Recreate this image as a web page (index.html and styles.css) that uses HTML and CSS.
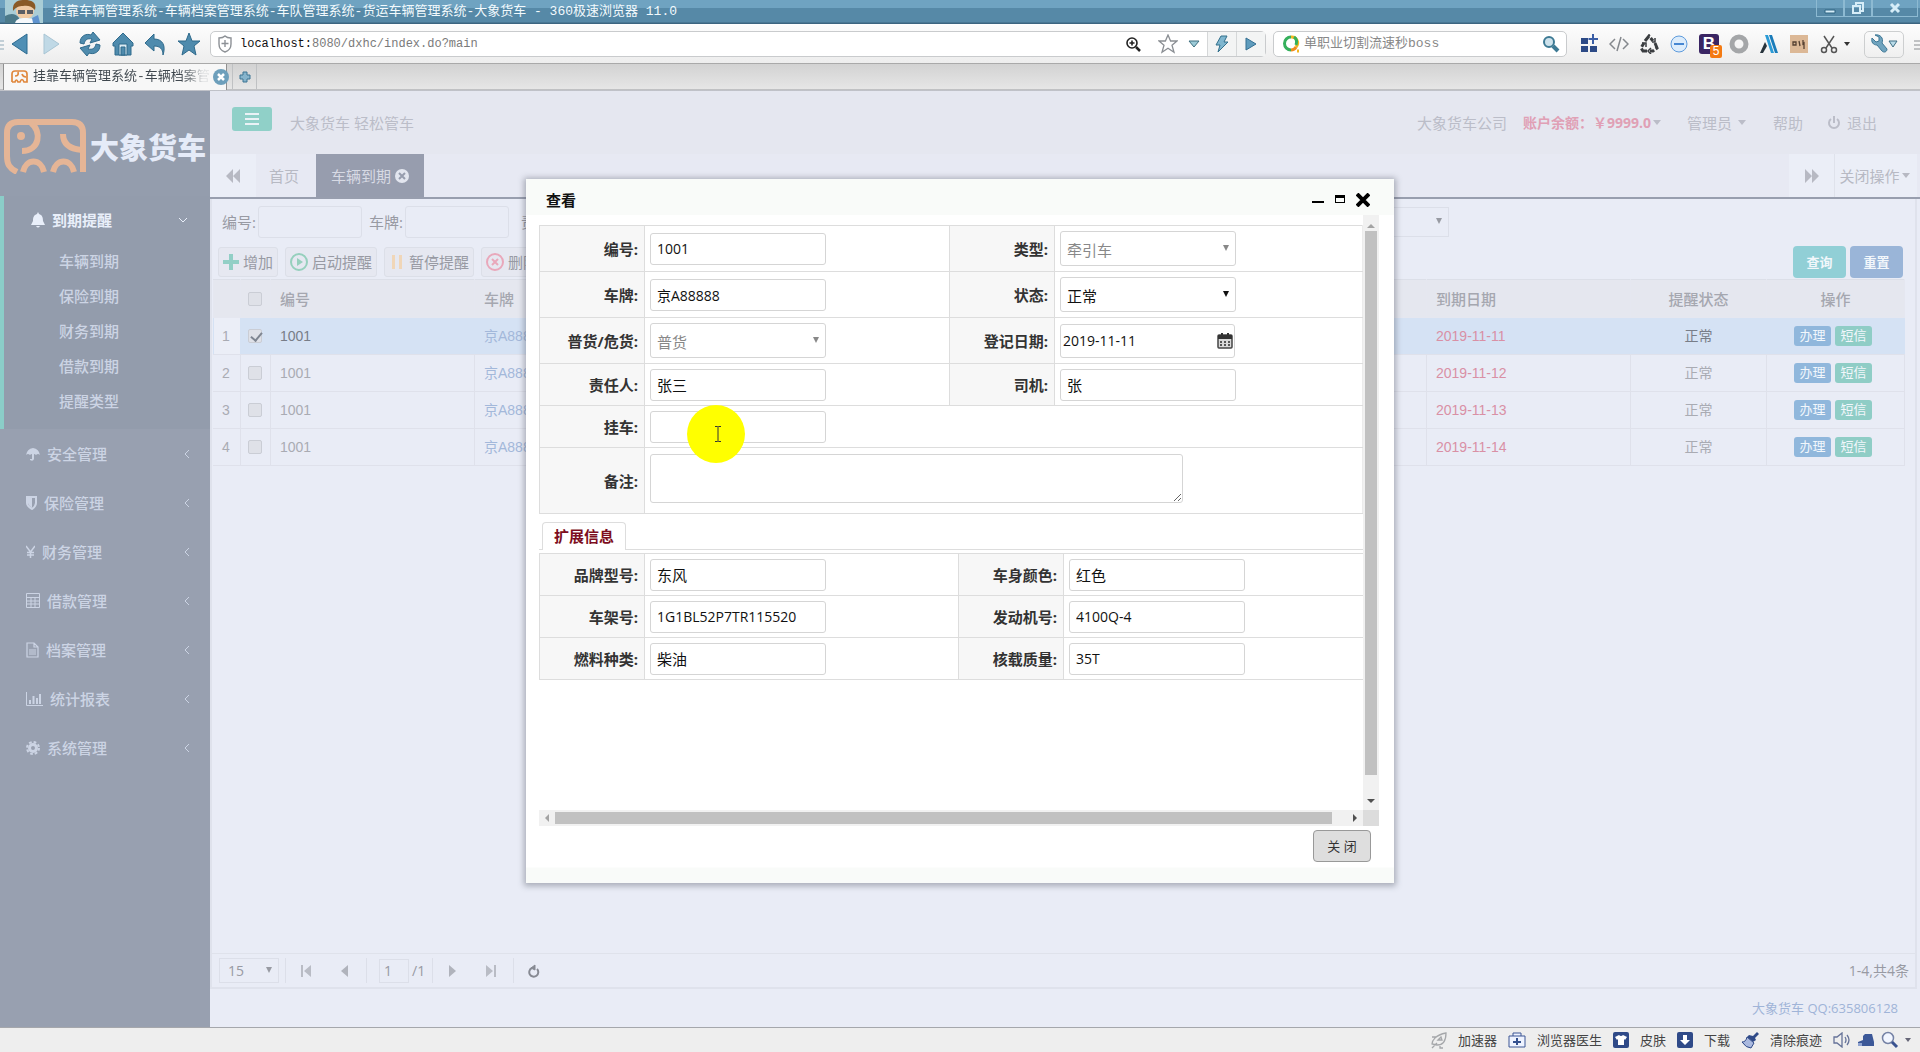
FILE: index.html
```html
<!DOCTYPE html>
<html lang="zh-CN">
<head>
<meta charset="utf-8">
<title>挂靠车辆管理系统-车辆档案管理系统</title>
<link rel="stylesheet" href="styles.css">
</head>
<body>
<div class="titlebar">
  <svg class="avatar" width="38" height="23" viewBox="0 0 38 23"><rect width="38" height="23" fill="#a9cdd6"/><path d="M0 16q9-5 14 2v5H0z" fill="#4c7a8a"/><ellipse cx="20" cy="11" rx="9" ry="8" fill="#f1cba4"/><path d="M8 11C7 1 14 0 20 0s12 2 10 10c-3-4-8-5-12-4-4 0-7 1-10 5z" fill="#8a5a26"/><path d="M13 10h7v4h-7zM22 10h6v4h-6z" fill="#5b5f66"/><path d="M10 23c1-4 5-5 10-5s12 1 13 5z" fill="#f5f8fb"/><path d="M27 18l6-3 2 8h-7z" fill="#5f93cf"/></svg>
  <span class="window-title">挂靠车辆管理系统-车辆档案管理系统-车队管理系统-货运车辆管理系统-大象货车 - 360极速浏览器 11.0</span>
  <div class="window-buttons">
    <button type="button" aria-label="最小化"><svg width="12" height="12"><path d="M1 8h10v3H1z" fill="#d6edf8" stroke="#2f6482"/></svg></button>
    <button type="button" aria-label="还原"><svg width="12" height="12" fill="none" stroke="#d6edf8" stroke-width="2"><path d="M4 3V1h7v8H9"/><path d="M1 4h7v7H1z"/></svg></button>
    <button type="button" class="wide" aria-label="关闭窗口"><svg width="12" height="12" fill="none" stroke="#d6edf8" stroke-width="3"><path d="M2 2l8 8M10 2l-8 8"/></svg></button>
  </div>
</div>

<div class="toolbar">
  <div class="nav-icons">
    <svg class="grip" width="5" height="24" stroke="#8fa9b8"><path d="M0 9h4M0 13h4M0 17h4"/></svg>
    <button type="button" aria-label="后退"><svg width="22" height="26"><path d="M18 3v20L3 13z" fill="#4f8fb5" stroke="#2b6a90" stroke-linejoin="round"/></svg></button>
    <button type="button" aria-label="前进"><svg width="22" height="26"><path d="M4 3v20l15-10z" fill="#c0d9e6" stroke="#a8c5d4" stroke-linejoin="round"/></svg></button>
    <button type="button" class="spaced" aria-label="刷新"><svg width="24" height="26" fill="#4f8bad" stroke="#2f6a8c" stroke-linejoin="round"><path d="M2 12C2 5 8 2 13 4l2-3 7 8-10 3 2-4c-5-1-7 1-8 5z"/><path d="M22 14c0 7-6 10-11 8l-2 3-7-8 10-3-2 4c5 1 7-1 8-5z"/></svg></button>
    <button type="button" aria-label="主页"><svg width="24" height="26" stroke="#2f6a8c" stroke-linejoin="round"><path d="M12 2l10 10v3h-2v9H4v-9H2v-3z" fill="#4f8bad"/><path d="M8 13h8v11h-8z" fill="#dcebf3"/><path d="M10 16h4v8h-4z" fill="#4f8bad"/></svg></button>
    <button type="button" aria-label="撤销"><svg width="24" height="26"><path d="M10 3v5c9 0 12 7 9 16 0-6-3-9-9-9v5L1 12z" fill="#4f8bad" stroke="#2f6a8c" stroke-linejoin="round"/></svg></button>
    <button type="button" aria-label="收藏"><svg width="24" height="26"><path d="M12 2l3 8h8l-6 5 2 9-7-5-7 5 2-9-6-5h8z" fill="#4f8bad" stroke="#2f6a8c" stroke-linejoin="round"/></svg></button>
  </div>
  <div class="address">
    <svg width="16" height="20" fill="none" stroke="#8d9196" stroke-width="1.4"><path d="M8 2c2 2 4 2 6 2v6c0 4-3 7-6 8-3-1-6-4-6-8V4c2 0 4 0 6-2zM8 6v7M4.500 9.500h7"/></svg>
    <span class="url"><span class="host">localhost:</span>8080/dxhc/index.do?main</span>
    <svg width="18" height="18" fill="none" stroke="#222" stroke-width="1.600"><circle cx="8" cy="8" r="5"/><path d="M12 12l4 4" stroke-width="2.500"/><path d="M5.500 8h5M8 5.500v5"/></svg>
    <svg class="fav" width="20" height="20" fill="#fff" stroke="#8a8e93" stroke-width="1.300"><path d="M10 1l2.600 6h6.400l-5 4.200 2 7-6-4-6 4 2-7L1 7h6.400z"/></svg>
    <svg width="12" height="8"><path d="M1 1h10L6 7z" fill="#9ccbd8" stroke="#3d6f7e"/></svg>
    <button type="button" class="seg" aria-label="极速模式"><svg width="14" height="18"><path d="M6 1h6L9 7h4L3 17l2-7H1z" fill="#7fb6cf" stroke="#33708c"/></svg></button>
    <button type="button" class="seg" aria-label="转到"><svg width="14" height="16"><path d="M2 2v12l10-6z" fill="#5f9cbd" stroke="#336f92"/></svg></button>
  </div>
  <div class="search">
    <svg width="18" height="20" fill="none" stroke-width="3"><path d="M8 3a6 6 0 0 1 5 10" stroke="#f3b61f"/><path d="M8 3a6 6 0 0 0 0 13" stroke="#35b05c"/><path d="M8 16c2 0 4-1 5-3" stroke="#f08b1d"/><path d="M11 3c3 2 3 5 2 8" stroke="#35b05c"/><path d="M14 17h2" stroke="#f3b61f"/></svg>
    <input class="search-text" aria-label="搜索" value="单职业切割流速秒boss">
    <svg width="18" height="20" fill="#cde2ec" stroke="#3d7a94" stroke-width="2"><circle cx="7" cy="8" r="5"/><path d="M11 12l5 5" stroke-width="4"/></svg>
  </div>
  <div class="extensions">
    <svg width="20" height="20" fill="#2c4a86"><path d="M2 4h7v6H2zM2 12h7v6H2zM11 12h7v6h-7z"/><path d="M13 0h2v4h4v2h-4v4h-2V6H9.500V4H13z" fill="#3a5ea6"/></svg>
    <svg width="20" height="16" fill="none" stroke="#84888d" stroke-width="1.500"><path d="M6 3L1 8l5 5M14 3l5 5-5 5M12 1L8 15"/></svg>
    <svg width="20" height="20" fill="none" stroke="#3a3d40" stroke-width="3"><path d="M6 7l4-5 4 5M16 9l2 5-4 3h-3M8 17H4l-2-3 3-5" stroke-dasharray="7 2"/><path d="M12 14l-3 3 3 3M13 8h3V4M3 9h4v4" stroke-width="1.500"/></svg>
    <svg width="20" height="20"><circle cx="10" cy="10" r="8" fill="#dcecfb" stroke="#5e9bdc"/><path d="M5 9h10v2H5z" fill="#4586d2"/></svg>
    <span class="ext-b">B<span class="badge">5</span></span>
    <svg width="20" height="20"><circle cx="10" cy="10" r="7" fill="none" stroke="#a4a6a8" stroke-width="5"/></svg>
    <svg width="20" height="20"><path d="M6 1h3l6 18h-3z" fill="#2b9bd6"/><path d="M10 1h3l6 18h-3z" fill="#1a7cba"/><path d="M6 8l2 4-4 7H1z" fill="#27333c"/></svg>
    <svg width="20" height="20"><path d="M1 1h18v18H1z" fill="#dcb896"/><path d="M4 8h3v3H4zM10 7l1 5M14 6v4l1-1v6" fill="none" stroke="#554032" stroke-width="1.300"/></svg>
    <svg width="20" height="20" fill="none" stroke="#555" stroke-width="1.500"><path d="M5 2l8 12M15 2L7 14"/><circle cx="5" cy="16" r="2.500"/><circle cx="15" cy="16" r="2.500"/></svg>
    <svg class="tiny" width="6" height="4"><path d="M0 0h6L3 4z" fill="#333"/></svg>
    <button type="button" class="wrench" aria-label="工具"><svg width="28" height="20"><path d="M2 4l4 4 3-1V3L5 1c5-1 9 3 7 8l5 6c0 3-3 4-5 2l-5-6C3 11 1 8 2 4z" fill="#6fa3be" stroke="#3f7896"/><path d="M19 7h8l-4 6z" fill="#b9dbe8" stroke="#3f6f85"/></svg></button>
    <svg width="6" height="24" stroke="#8a8d90"><path d="M0 9h6M0 13h6M0 17h6"/></svg>
  </div>
</div>

<div class="tabstrip">
  <div class="browser-tab">
    <svg width="18" height="14" fill="none" stroke="#e0873c" stroke-width="1.700"><path d="M2 12V4q0-3 3-3h9q3 0 3 3v8h-3q-2-5-4 0H8q-2-4-3 0H2M8 2q1 4-3 4M12 4q1 3 4 3"/></svg>
    <span class="tab-title">挂靠车辆管理系统-车辆档案管</span>
    <button type="button" aria-label="关闭标签"><svg width="16" height="16"><circle cx="8" cy="8" r="8" fill="#6d9fbb"/><path d="M5 5l6 6M11 5l-6 6" stroke="#fff" stroke-width="2.500"/></svg></button>
  </div>
  <button type="button" class="new-tab" aria-label="新标签"><svg width="12" height="12"><path d="M4 1h4v3h3v4H8v3H4V8H1V4h3z" fill="#86b4cc" stroke="#3c7593"/></svg></button>
</div>

<div class="app">
  <aside class="sidebar">
    <div class="logo">
      <svg width="84" height="56" viewBox="0 0 84 56" fill="none" stroke="#e5b596" stroke-width="6"><path d="M14 54C6 50 4 46 4 38V15Q4 4 15 4H69Q80 4 80 15V54"/><path d="M20 54C23 40 38 40 41 54M50 54C53 40 68 40 71 54"/><path d="M28 5C39 13 37 33 19 33"/><path d="M60 16C60 25 66 31 79 32"/><circle cx="18" cy="18" r="4" fill="#e5b596" stroke="none"/></svg>
      <span>大象货车</span>
    </div>
    <nav>
      <div class="group-active">
        <a href="#" class="group-head"><svg width="14" height="16" fill="currentColor"><path d="M7 0l1 2c3 1 4 3 4 7l2 4H0l2-4c0-4 1-6 4-7zM5 14h4q-2 3-4 0z"/></svg><span>到期提醒</span><svg class="chev" width="8" height="6" fill="none" stroke="currentColor"><path d="M0 1l4 4 4-4"/></svg></a>
        <a href="#" class="sub">车辆到期</a>
        <a href="#" class="sub">保险到期</a>
        <a href="#" class="sub">财务到期</a>
        <a href="#" class="sub">借款到期</a>
        <a href="#" class="sub">提醒类型</a>
      </div>
      <a href="#" class="group"><svg width="14" height="14" fill="currentColor"><path d="M0 8Q1 2 7 1q6 1 7 7-2-2-4 0-1-1-2-1v5q-1 3-4 1v-1h2V7q-1 0-2 1-2-2-4 0z"/></svg><span>安全管理</span><svg class="chev" width="6" height="8" fill="none" stroke="currentColor"><path d="M5 0L1 4l4 4"/></svg></a>
      <a href="#" class="group"><svg width="11" height="14" fill="none" stroke="currentColor" stroke-width="2"><path d="M1 1h9v6q0 3-4 6Q1 10 1 7z"/><path d="M2 2h4v10Q2 9 2 7z" fill="currentColor" stroke="none"/></svg><span>保险管理</span><svg class="chev" width="6" height="8" fill="none" stroke="currentColor"><path d="M5 0L1 4l4 4"/></svg></a>
      <a href="#" class="group"><svg width="9" height="14" fill="none" stroke="currentColor" stroke-width="1.500"><path d="M0 1l4.500 6L9 1M4.500 7v6M1 7.500h7M1 10h7"/></svg><span>财务管理</span><svg class="chev" width="6" height="8" fill="none" stroke="currentColor"><path d="M5 0L1 4l4 4"/></svg></a>
      <a href="#" class="group"><svg width="14" height="16" fill="none" stroke="currentColor"><path d="M.5.500h13v14H.500zM1 4.500h13M1 8h13M1 11h13M5 5v10M9 5v10"/></svg><span>借款管理</span><svg class="chev" width="6" height="8" fill="none" stroke="currentColor"><path d="M5 0L1 4l4 4"/></svg></a>
      <a href="#" class="group"><svg width="13" height="16" fill="none" stroke="currentColor" stroke-width="1.200"><path d="M1 1h7l4 4v10H1zM8 1v4h4M3 8h7M3 10h7M3 12h7"/></svg><span>档案管理</span><svg class="chev" width="6" height="8" fill="none" stroke="currentColor"><path d="M5 0L1 4l4 4"/></svg></a>
      <a href="#" class="group"><svg width="17" height="14" fill="none" stroke="currentColor"><path d="M.5 0v13.500H17"/><path d="M4 12V8M7.500 12V4M11 12V6M14 12V2" stroke-width="2"/></svg><span>统计报表</span><svg class="chev" width="6" height="8" fill="none" stroke="currentColor"><path d="M5 0L1 4l4 4"/></svg></a>
      <a href="#" class="group"><svg width="14" height="14" fill="none" stroke="currentColor"><circle cx="7" cy="7" r="3.500" stroke-width="3"/><circle cx="7" cy="7" r="6" stroke-width="2" stroke-dasharray="2.700 2"/></svg><span>系统管理</span><svg class="chev" width="6" height="8" fill="none" stroke="currentColor"><path d="M5 0L1 4l4 4"/></svg></a>
    </nav>
  </aside>

  <main class="main">
    <header class="topbar">
      <button type="button" class="menu-btn" aria-label="菜单"><svg width="14" height="14" fill="#eaf2f6"><path d="M0 1h14v2H0zM0 6h14v2H0zM0 11h14v2H0z"/></svg></button>
      <span class="slogan">大象货车 轻松管车</span>
      <div class="account">
        <span>大象货车公司</span>
        <a href="#" class="balance">账户余额：￥9999.0<i class="caret"></i></a>
        <a href="#" class="admin">管理员 <i class="caret"></i></a>
        <a href="#" class="help">帮助</a>
        <a href="#" class="quit"><svg width="14" height="14" fill="none" stroke="currentColor" stroke-width="2"><path d="M4 3a5 5 0 1 0 6 0M7 0v7"/></svg>退出</a>
      </div>
    </header>
    <div class="page-tabs">
      <button type="button" class="scroll-btn" aria-label="向左"><svg width="14" height="14" fill="currentColor"><path d="M7 0v14L0 7zM14 0v14L7 7z"/></svg></button>
      <a href="#" class="page-tab">首页</a>
      <a href="#" class="page-tab current">车辆到期<svg width="14" height="14"><circle cx="7" cy="7" r="7" fill="#e3e6ef"/><path d="M4 4l6 6M10 4l-6 6" stroke="#979dae" stroke-width="2"/></svg></a>
      <button type="button" class="scroll-btn right" aria-label="向右"><svg width="14" height="14" fill="currentColor"><path d="M0 0v14l7-7zM7 0v14l7-7z"/></svg></button>
      <button type="button" class="close-ops">关闭操作<i class="caret"></i></button>
    </div>
    <section class="panel">
      <form class="filters">
        <label for="f-no">编号:</label><input id="f-no">
        <label for="f-plate">车牌:</label><input id="f-plate">
        <label for="f-owner" class="owner">责任人:</label>
        <span class="select-wrap"><select id="f-owner"><option></option></select></span>
      </form>
      <div class="actions">
        <button type="button"><svg width="16" height="16"><path d="M6 0h4v6h6v4h-6v6H6v-6H0V6h6z" fill="#92cfc6"/></svg>增加</button>
        <button type="button"><svg width="18" height="18"><circle cx="9" cy="9" r="8" fill="none" stroke="#96d0bd" stroke-width="2"/><path d="M7 5v8l6-4z" fill="#96d0bd"/></svg>启动提醒</button>
        <button type="button" class="pause"><svg width="18" height="16"><path d="M3 1h3v14H3zM10 1h3v14h-3z" fill="#f0d6b8"/></svg>暂停提醒</button>
        <button type="button"><svg width="18" height="18" fill="none" stroke="#e9a8bb" stroke-width="2"><circle cx="9" cy="9" r="8"/><path d="M6 6l6 6M12 6l-6 6"/></svg>删除</button>
        <button type="button" class="query">查询</button>
        <button type="button" class="reset">重置</button>
      </div>
      <table class="grid">
        <colgroup><col class="c-num"><col class="c-check"><col class="c-no"><col><col class="c-date"><col class="c-state"><col class="c-ops"></colgroup>
        <thead><tr><th></th><th><input type="checkbox" aria-label="全选"></th><th>编号</th><th>车牌</th><th>到期日期</th><th class="center">提醒状态</th><th class="center">操作</th></tr></thead>
        <tbody>
          <tr class="selected"><td>1</td><td><input type="checkbox" aria-label="选择1" checked></td><td>1001</td><td><a href="#">京A88888</a></td><td class="due">2019-11-11</td><td class="center">正常</td><td class="ops"><button type="button">办理</button><button type="button" class="sms">短信</button></td></tr>
          <tr><td>2</td><td><input type="checkbox" aria-label="选择2"></td><td>1001</td><td><a href="#">京A88888</a></td><td class="due">2019-11-12</td><td class="center">正常</td><td class="ops"><button type="button">办理</button><button type="button" class="sms">短信</button></td></tr>
          <tr><td>3</td><td><input type="checkbox" aria-label="选择3"></td><td>1001</td><td><a href="#">京A88888</a></td><td class="due">2019-11-13</td><td class="center">正常</td><td class="ops"><button type="button">办理</button><button type="button" class="sms">短信</button></td></tr>
          <tr><td>4</td><td><input type="checkbox" aria-label="选择4"></td><td>1001</td><td><a href="#">京A88888</a></td><td class="due">2019-11-14</td><td class="center">正常</td><td class="ops"><button type="button">办理</button><button type="button" class="sms">短信</button></td></tr>
        </tbody>
      </table>
      <div class="pager">
        <span class="select-wrap"><select aria-label="每页条数"><option>15</option></select></span>
        <div class="pair">
          <button type="button" aria-label="首页"><svg width="10" height="12"><path d="M0 0h2v12H0zM10 0v12L3 6z" fill="#b9bcc5"/></svg></button>
          <button type="button" aria-label="上一页"><svg width="8" height="12"><path d="M7 0v12L0 6z" fill="#b0b3bc"/></svg></button>
        </div>
        <div class="page-no"><input aria-label="页码" value="1"><span>/1</span></div>
        <div class="pair">
          <button type="button" aria-label="下一页"><svg width="8" height="12"><path d="M1 0v12l7-6z" fill="#b0b3bc"/></svg></button>
          <button type="button" aria-label="末页"><svg width="10" height="12"><path d="M8 0h2v12H8zM0 0v12l7-6z" fill="#b9bcc5"/></svg></button>
        </div>
        <button type="button" class="refresh" aria-label="刷新列表"><svg width="12" height="14" fill="none" stroke="#878a93" stroke-width="2"><path d="M4 4a4.500 4.500 0 1 0 5 1"/><path d="M3 4l4-3v5z" fill="#878a93" stroke-width="1"/></svg></button>
        <span class="total">1-4,共4条</span>
      </div>
    </section>
    <footer class="page-foot">大象货车 QQ:635806128</footer>
  </main>

  <div class="overlay">
    <div class="dialog" role="dialog" aria-labelledby="dlg-title">
      <div class="dialog-head">
        <h2 id="dlg-title">查看</h2>
        <button type="button" aria-label="最小化"><svg width="12" height="14"><path d="M0 8h12v2H0z"/></svg></button>
        <button type="button" aria-label="最大化"><svg width="12" height="14"><path d="M1 2h10v8H1zM2 5v4h8V5z" fill-rule="evenodd"/></svg></button>
        <button type="button" aria-label="关闭"><svg width="14" height="14" stroke="#000" stroke-width="4"><path d="M1 1l12 12M13 1L1 13"/></svg></button>
      </div>
      <div class="dialog-body">
        <div class="viewport">
          <table class="form base">
            <colgroup><col class="k"><col class="v1"><col class="k"><col></colgroup>
            <tr class="tall"><th><label for="no">编号:</label></th><td><input id="no" value="1001"></td><th><label for="type">类型:</label></th><td><span class="select-wrap"><select id="type" disabled><option>牵引车</option></select></span></td></tr>
            <tr class="tall"><th><label for="plate">车牌:</label></th><td><input id="plate" value="京A88888"></td><th><label for="state">状态:</label></th><td><span class="select-wrap"><select id="state"><option>正常</option></select></span></td></tr>
            <tr class="tall"><th><label for="goods">普货/危货:</label></th><td><span class="select-wrap"><select id="goods" disabled><option>普货</option></select></span></td><th><label for="reg">登记日期:</label></th><td><span class="date"><input id="reg" value="2019-11-11"><svg width="16" height="16"><path d="M2 2h12q1 0 1 1v11q0 1-1 1H2q-1 0-1-1V3q0-1 1-1z" fill="#d8d8d8" stroke="#444" stroke-width="1.500"/><path d="M1 2h14v4H1zM4 0h2v3H4zM10 0h2v3h-2z" fill="#333"/><path d="M3 8h2v2H3zM7 8h2v2H7zM11 8h2v2h-2zM3 11h2v2H3zM7 11h2v2H7zM11 11h2v2h-2z" fill="#555"/></svg></span></td></tr>
            <tr><th><label for="duty">责任人:</label></th><td><input id="duty" class="han" value="张三"></td><th><label for="driver">司机:</label></th><td><input id="driver" class="han" value="张"></td></tr>
            <tr><th><label for="trailer">挂车:</label></th><td colspan="3"><input id="trailer"></td></tr>
            <tr class="memo"><th><label for="memo">备注:</label></th><td colspan="3"><textarea id="memo"></textarea></td></tr>
          </table>
          <div class="ext-tabs"><span>扩展信息</span></div>
          <table class="form extra">
            <colgroup><col class="k"><col class="v2"><col class="k"><col></colgroup>
            <tr><th><label for="brand">品牌型号:</label></th><td><input id="brand" class="han" value="东风"></td><th><label for="color">车身颜色:</label></th><td><input id="color" class="han" value="红色"></td></tr>
            <tr><th><label for="vin">车架号:</label></th><td><input id="vin" value="1G1BL52P7TR115520"></td><th><label for="engine">发动机号:</label></th><td><input id="engine" value="4100Q-4"></td></tr>
            <tr><th><label for="fuel">燃料种类:</label></th><td><input id="fuel" class="han" value="柴油"></td><th><label for="load">核载质量:</label></th><td><input id="load" value="35T"></td></tr>
          </table>
        </div>
        <div class="vbar"><svg width="8" height="4"><path d="M0 4l4-4 4 4z" fill="#a3a3a3"/></svg><i></i><svg width="8" height="4"><path d="M0 0h8L4 4z" fill="#505050"/></svg></div>
        <div class="hbar"><svg width="4" height="8"><path d="M4 0v8L0 4z" fill="#a3a3a3"/></svg><i></i><svg width="4" height="8"><path d="M0 0v8l4-4z" fill="#505050"/></svg></div>
        <div class="corner"></div>
      </div>
      <div class="dialog-foot"><button type="button">关 闭</button></div>
      <div class="pointer"><svg width="8" height="16" fill="none" stroke="#333"><path d="M1 .500h2.500l.500.500.500-.500H7M1 15.500h2.500l.500-.500.500.500H7M4 1v14"/></svg></div>
    </div>
  </div>
</div>

<div class="statusbar">
  <svg width="16" height="18" fill="none" stroke="#a5a7aa" stroke-width="1.300"><path d="M1 13c0-3 3-9 14-11 0 8-3 12-9 12zM1 6h4M1 17l5-5M9 15v2h3M7 9l3-3 1 3z"/></svg><span>加速器</span>
  <svg width="18" height="18" fill="#eef3ff" stroke="#3d5795"><path d="M5 5V2h8v3M1 5h16v11H1z"/><path d="M8 7h2v3h3v2h-3v2H8v-2H5v-2h3z" fill="#33508f" stroke="none"/></svg><span>浏览器医生</span>
  <svg width="16" height="16"><rect width="16" height="16" rx="2" fill="#2f4a88"/><path d="M6 3q2 2 4 0l4 2-2 3-1-1v6H5V7L4 8 2 5z" fill="#fff"/></svg><span>皮肤</span>
  <svg width="16" height="16"><rect width="16" height="16" rx="2" fill="#2f4a88"/><path d="M6 3h4v5h3l-5 5-5-5h3z" fill="#fff"/></svg><span>下载</span>
  <svg width="18" height="18"><path d="M12 5l4-4 2 2-4 4 1 2-3 2-6-5 2-2z" fill="#2f4a88"/><path d="M6 6l7 6-3 5q-5 0-9-6 4 0 5-5z" fill="#aab9df" stroke="#2f4a88"/></svg><span>清除痕迹</span>
  <svg width="18" height="16" fill="none" stroke="#667399" stroke-width="1.300"><path d="M1 5h3l5-4v14l-5-4H1zM12 5q2 3 0 6M14 3q4 5 0 10"/></svg>
  <svg width="18" height="14"><path d="M6 3l2-2h7l2 8v4H1V9l5-2z" fill="#3c5898"/><path d="M1 10h4v3H1z" fill="#8fa3d0"/></svg>
  <svg width="18" height="18"><circle cx="7" cy="7" r="5.500" fill="#f2f6ff" stroke="#7582a5" stroke-width="1.500"/><path d="M11 11l5 5" stroke="#3a5390" stroke-width="3"/></svg>
  <svg width="6" height="4"><path d="M0 0h6L3 4z" fill="#667"/></svg>
</div>
</body>
</html>
```
FILE: styles.css
```css
* { box-sizing: border-box; }
body {
  margin: 0;
  min-height: 100vh;
  display: flex;
  flex-direction: column;
  font: 15px/20px "Open Sans", "Noto Sans CJK SC", sans-serif;
  color: #9d9fa8;
  background: #e9ecf6;
}
button, input, select, textarea { font: inherit; color: inherit; margin: 0; padding: 0; border: 0; background: none; }
a { color: inherit; text-decoration: none; }
svg { display: block; flex: none; }
button { display: flex; align-items: center; justify-content: center; }
table { border-collapse: collapse; table-layout: fixed; width: 100%; }

/* browser chrome */
.titlebar {
  height: 24px;
  display: flex;
  align-items: center;
  padding-left: 5px;
  gap: 10px;
  background: linear-gradient(#6fa3c1 0 8px, #5689a7 8px 22px, #3c6580 23px);
  color: #f2fafd;
  font: 13px/24px "Liberation Mono", "Noto Sans CJK SC", monospace;
}
.avatar { align-self: flex-start; }
.window-title { flex: 1; white-space: nowrap; }
.window-buttons { display: flex; align-self: flex-start; margin-right: 2px; }
.window-buttons button { width: 28px; height: 17px; border: 1px solid #8dbad2; border-top: 0; }
.window-buttons .wide { width: 46px; }
.toolbar { height: 39px; display: flex; align-items: center; background: linear-gradient(#fdfdfd, #ededed); border-top: 1px solid #fff; }
.nav-icons { width: 210px; display: flex; align-items: center; gap: 9px; }
.nav-icons .grip { margin-right: -5px; }
.nav-icons .spaced { margin-left: 7px; }
.address, .search { display: flex; align-items: center; height: 26px; border: 1px solid #c9cbcd; border-radius: 5px; background: #fff; }
.address { flex: 1; padding-left: 6px; margin-right: 7px; }
.url { flex: 1; padding-left: 7px; font: 12px/20px "Liberation Mono", monospace; color: #7a7a7a; }
.host { color: #111; }
.address .fav { margin: 0 10px 0 16px; }
.seg { width: 29px; height: 24px; border-left: 1px solid #d5d7d8; background: #f3f4f4; }
.fav + svg { margin-right: 7px; }
.search { width: 294px; padding: 0 6px 0 9px; gap: 3px; }
.search-text { flex: 1; min-width: 0; font: 13px/20px "Liberation Mono", "Noto Sans CJK SC", monospace; color: #888; }
.extensions { display: flex; align-items: center; gap: 10px; padding-left: 12px; }
.ext-b { position: relative; width: 20px; height: 20px; background: #3a2563; border-radius: 3px; color: #fff; font: bold 17px/20px "Liberation Sans", sans-serif; text-align: center; }
.badge { position: absolute; left: 11px; top: 11px; width: 12px; height: 13px; background: #f47a12; border-radius: 2px; font: 12px/13px "Liberation Sans", sans-serif; }
.extensions .tiny { margin-left: -5px; }
.wrench { width: 40px; height: 27px; margin-left: 4px; border: 1px solid #cdcfd0; border-radius: 5px; }
.tabstrip { height: 28px; display: flex; padding-left: 3px; background: linear-gradient(#d2d2d2, #e6e6e6 25px, #9a9ca0 26px, #e5e7f0 27px); border-top: 1px solid #a9a9a9; }
.browser-tab { width: 224px; height: 26px; display: flex; align-items: center; gap: 3px; padding: 0 4px 0 6px; border: 1px solid #909090; border-top: 0; border-bottom: 0; background: #f7f7f7; }
.tab-title { flex: 1; white-space: nowrap; padding-left: 2px; font: 13px/20px "Liberation Mono", "Noto Sans CJK SC", monospace; color: transparent; background: linear-gradient(90deg, #3f474e 152px, #dfe1e2 172px); -webkit-background-clip: text; background-clip: text; }
.new-tab { width: 25px; height: 25px; margin-left: 5px; border: 1px solid #bfc1c3; border-width: 0 1px; }

/* application */
.app { flex: 1; display: flex; position: relative; border-bottom: 1px solid #a5a7ac; }
.sidebar { width: 210px; background: #98a0b0; color: #ccd4e4; font-weight: 500; }
.logo { height: 105px; display: flex; align-items: center; gap: 3px; padding: 4px 0 0 3px; background: #949dad; color: #e5ebf8; font-size: 29px; line-height: 40px; font-weight: 900; white-space: nowrap; }
.logo span { padding-top: 4px; }
.sidebar nav { display: flex; flex-direction: column; }
.group-active { border-left: 4px solid #8bcdc8; background: #939cac; height: 233px; }
.group-head { display: flex; align-items: center; height: 48px; padding: 0 23px 0 27px; gap: 7px; color: #e9effa; font-weight: 700; }
.chev { margin-left: auto; }
.sub { display: block; padding-left: 55px; line-height: 35px; height: 35px; }
.group { display: flex; align-items: center; gap: 7px; height: 49px; padding: 0 20px 0 26px; }
.main { flex: 1; min-width: 0; display: flex; flex-direction: column; }
.topbar { height: 63px; display: flex; align-items: center; padding: 0 43px 0 22px; background: #e5e7f0; color: #bbbdc8; }
.menu-btn { width: 40px; height: 24px; margin-bottom: 8px; border-radius: 3px; background: #90d0c8; }
.slogan { margin-left: 18px; }
.account { display: flex; align-items: center; margin-left: auto; }
.account a { display: flex; align-items: center; }
.caret { display: inline-block; border: 4px solid transparent; border-top: 5px solid currentColor; border-bottom: 0; margin-left: 2px; }
.balance { margin-left: 16px; color: #e0a0b5; font-weight: 700; font-size: 14px; }
.balance .caret { color: #bbbdc8; }
.admin { margin-left: 26px; }
.admin .caret { margin-left: 6px; }
.help { margin-left: 27px; }
.quit { margin-left: 24px; gap: 6px; }
.page-tabs { height: 45px; display: flex; padding-right: 3px; border-bottom: 2px solid #989eae; background: #e7e9f3; color: #b7b9c3; }
.scroll-btn { width: 46px; background: #ebeef7; }
.page-tab { display: flex; align-items: center; gap: 4px; padding: 0 17px 0 13px; }
.current { background: #979dae; color: #d7dae4; padding: 0 15px 0 15px; }
.scroll-btn.right { margin-left: auto; border-right: 1px solid #dfe2eb; }
.close-ops { padding: 0 6px 0 3px; width: 82px; background: #ebeef7; }
.panel { flex: 1; display: flex; flex-direction: column; margin-right: 3px; border: 2px solid #dfe2ec; border-top: 0; color: #989aa3; }
.filters { display: flex; align-items: center; height: 46px; padding: 0 0 0 10px; }
.filters input { width: 104px; height: 32px; margin: 0 7px 0 2px; border: 1px solid #dcdfe9; border-radius: 3px; }
.filters .owner { margin-left: 5px; width: 64px; }
.select-wrap { position: relative; display: inline-block; }
.select-wrap::after { content: ""; position: absolute; right: 7px; top: 50%; margin-top: -4px; border: 3px solid transparent; border-top: 6px solid currentColor; border-bottom: 0; pointer-events: none; }
select { appearance: none; opacity: 1; }
.filters .select-wrap { flex: none; width: 864px; }
.filters select { display: block; width: 100%; height: 30px; border: 1px solid #dcdfe9; }
.actions { display: flex; align-items: center; gap: 7px; height: 34px; padding: 0 12px 0 6px; }
.actions button { height: 30px; padding: 0 4px; gap: 4px; border: 1px solid #dcdfe8; border-radius: 3px; background: #e6e8f1; }
.actions .pause { gap: 2px; }
.actions .query, .actions .reset { width: 53px; height: 32px; border: 0; border-radius: 4px; color: #f2f7fb; font-size: 13px; font-weight: 700; background: #91cfd6; }
.actions .query { margin-left: auto; }
.actions .reset { margin-left: -3px; background: #9ab5d8; }
.grid { width: calc(100% - 11px); margin-left: 1px; line-height: 20px; color: #a9abb3; }
.c-num { width: 27px; }
.c-check { width: 30px; }
.c-no, .c-date { width: 204px; }
.c-state { width: 136px; }
.c-ops { width: 138px; }
.grid th, .grid td { height: 37px; padding: 0 9px; text-align: left; border: 1px solid #dfe1eb; }
.grid th { height: 38px; border-color: #e5e7f0; border-top-color: #dcdfe8; background: #e5e7ef; font-weight: 500; color: #a5a7b0; }
.grid td { font-size: 14px; font-family: "Liberation Sans", "Noto Sans CJK SC", sans-serif; }
.grid td:first-child { padding: 0 0 0 8px; border-left-color: #e9ecf6; }
.grid th:nth-child(2), .grid td:nth-child(2) { padding: 0 0 0 7px; }
.grid .center { text-align: center; }
.grid a { color: #a3b8da; }
.grid .due { color: #d990a5; }
.grid .selected td { background: #d5e2f4; border-color: #d5e2f4; border-bottom-color: #dfe1eb; }
.selected td { color: #787d88; }
.grid .selected td:first-child { background: #ebeef7; color: #a9abb3; }
.grid input { appearance: none; display: block; width: 14px; height: 14px; border: 1px solid #cacdd5; border-radius: 2px; background: #dfe1e8; }
.grid input:checked::after { content: ""; display: block; width: 9px; height: 5px; margin: 2px 0 0 2px; border: 2px solid #7e8591; border-width: 0 0 2px 2px; transform: rotate(-50deg); }
.ops button { display: inline-flex; width: 37px; height: 20px; margin-left: 18px; border-radius: 3px; background: #90b7dc; color: #f2f7fc; }
.grid .ops { white-space: nowrap; font-size: 13px; }
.ops .sms { margin-left: 4px; background: #8fcdc6; }
.pager { display: flex; align-items: center; gap: 6px; height: 34px; margin-top: auto; padding: 0 6px 0 7px; border-top: 1px solid #dfe2eb; font-size: 14px; }
.pager select { display: block; width: 60px; height: 25px; padding-left: 8px; border: 1px solid #dcdfe9; }
.pager .pair { display: flex; align-items: center; height: 25px; width: 82px; padding: 0 17px 0 15px; justify-content: space-between; border: 1px solid #dcdfe9; border-width: 0 1px; }
.page-no { display: flex; align-items: center; gap: 3px; width: 53px; padding-left: 6px; }
.page-no input { width: 30px; height: 24px; padding-left: 4px; border: 1px solid #dcdfe9; }
.refresh { margin-left: 8px; }
.total { margin-left: auto; }
.page-foot { height: 38px; padding-right: 22px; line-height: 38px; text-align: right; font-size: 13px; color: #a0b4d8; }

/* dialog */
.overlay { position: absolute; inset: 0; padding-top: 88px; }
.dialog { position: relative; width: 868px; margin: 0 auto; background: #fff; color: #111; box-shadow: 0 1px 6px 2px rgba(70, 75, 90, .4); }
.dialog-head { display: flex; align-items: center; gap: 10px; height: 36px; padding: 6px 24px 0 20px; background: #f9fbf9; }
.dialog-head h2 { margin: 0 auto 0 0; font-size: 15px; font-weight: 700; }
.dialog-body { display: grid; grid-template-columns: 1fr 16px; grid-template-rows: 595px 16px; padding: 0 15px 0 13px; }
.viewport { overflow: hidden; padding-top: 10px; }
.form { color: #111; }
.form tr { height: 42px; }
.form .tall { height: 46px; }
.form .memo { height: 66px; }
.form th, .form td { padding: 0 5px; border: 1px solid #ddd; }
.form .memo td { padding-bottom: 4px; }
.form td:last-child { border-right-color: #ececec; }
.form th { padding-right: 6px; background: #f7f7f7; color: #333; text-align: right; font-size: 15px; font-weight: 700; }
.k { width: 105px; }
.v1 { width: 305px; }
.v2 { width: 314px; }
.form input, .form select, .form textarea { display: block; width: 176px; height: 32px; padding: 0 6px; border: 1px solid #d5d5d5; border-radius: 3px; font-size: 14px; background: #fff; }
.form .han, .form select { font-size: 15px; }
.form textarea { width: 533px; height: 49px; }
.form .select-wrap { display: block; width: 176px; }
.form select { height: 35px; padding-top: 2px; color: #111; }
.form select:disabled { color: #888; }
.form .select-wrap:has(:disabled) { color: #888; }
.date { display: flex; align-items: center; justify-content: space-between; width: 175px; height: 34px; padding-right: 1px; border: 1px solid #d5d5d5; border-radius: 3px; }
.form .date input { width: 140px; height: 30px; padding: 0 2px; border: 0; }
.ext-tabs { height: 36px; display: flex; align-items: flex-end; padding-left: 3px; border-bottom: 1px solid #ddd; margin-bottom: 3px; }
.ext-tabs span { height: 28px; margin-bottom: -1px; padding: 0 11px; border: 1px solid #ddd; border-bottom: 0; border-radius: 4px 4px 0 0; background: #fff; color: #7d0d20; font-weight: 700; line-height: 26px; }
.extra { width: 900px; }
.vbar, .hbar { display: flex; align-items: center; background: #f1f1f1; }
.vbar { flex-direction: column; padding: 9px 0 7px; }
.vbar i { width: 12px; height: 544px; margin: 3px 0 auto; background: #c1c1c1; }
.hbar { padding: 0 6px; }
.hbar i { width: 777px; height: 12px; margin: 0 auto 0 6px; background: #c1c1c1; }
.corner { background: #dcdcdc; }
.dialog-foot { display: flex; justify-content: flex-end; height: 57px; padding: 4px 23px 0; background: linear-gradient(#fff 41px, #f9fbf9 42px); }
.dialog-foot button { width: 58px; height: 32px; border: 1px solid #999; border-radius: 4px; background: #dedede; color: #333; font-size: 13px; }
.pointer { position: absolute; left: 161px; top: 226px; width: 58px; height: 58px; display: grid; place-items: center; padding-left: 4px; border-radius: 50%; background: #ff0; }

/* browser status bar */
.statusbar { height: 24px; display: flex; align-items: center; justify-content: flex-end; gap: 11px; padding-right: 9px; background: #eee; color: #444; font-size: 13px; }
.statusbar svg + svg { margin-left: -5px; }
```
